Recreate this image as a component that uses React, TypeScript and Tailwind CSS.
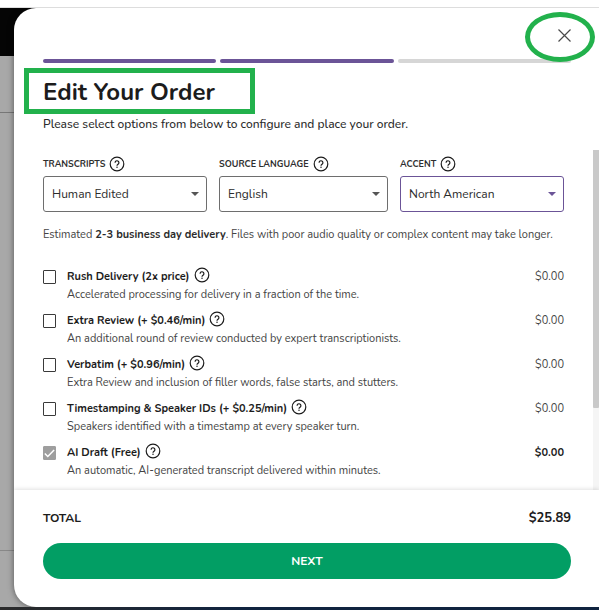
import { useState } from 'react'

const fields = [
  { id: 'transcripts', label: 'TRANSCRIPTS', value: 'Human Edited', active: false },
  { id: 'language', label: 'SOURCE LANGUAGE', value: 'English', active: false },
  { id: 'accent', label: 'ACCENT', value: 'North American', active: true },
]

const options = [
  {
    id: 'rush',
    title: 'Rush Delivery (2x price)',
    text: 'Accelerated processing for delivery in a fraction of the time.',
  },
  {
    id: 'review',
    title: 'Extra Review (+ $0.46/min)',
    text: 'An additional round of review conducted by expert transcriptionists.',
  },
  {
    id: 'verbatim',
    title: 'Verbatim (+ $0.96/min)',
    text: 'Extra Review and inclusion of filler words, false starts, and stutters.',
  },
  {
    id: 'timestamps',
    title: 'Timestamping & Speaker IDs (+ $0.25/min)',
    text: 'Speakers identified with a timestamp at every speaker turn.',
  },
  {
    id: 'draft',
    title: 'AI Draft (Free)',
    text: 'An automatic, AI-generated transcript delivered within minutes.',
    included: true,
  },
]

const HelpButton = ({ topic }: { topic: string }) => (
  <button type="button" aria-label={`Help: ${topic}`} className="shrink-0 self-start text-[#1c1c1c]">
    <svg viewBox="0 0 16 16" className="block size-4" fill="none" stroke="currentColor">
      <circle cx="8" cy="8" r="6.8" strokeWidth="1.2" />
      <path d="M6.1 6.7a1.9 1.9 0 1 1 3 1.5C8.4 8.7 8 8.9 8 9.7" strokeWidth="1.2" />
      <circle cx="8" cy="11.3" r="0.75" fill="currentColor" stroke="none" />
    </svg>
  </button>
)

const SelectField = ({ id, label, value, active }: any) => (
  <div>
    <div className="flex h-[18px] items-center gap-1">
      <label htmlFor={id} className="whitespace-nowrap text-[9px] font-bold text-[#2e2e2e]">
        {label}
      </label>
      <HelpButton topic={label} />
    </div>
    <div className="relative mt-0.5">
      <select
        id={id}
        className={`block h-9 w-full appearance-none rounded-[3px] border bg-white px-2 text-xs text-[#2b2b2b] outline-none ${
          active ? 'border-[#6b5497]' : 'border-[#6e6e6e]'
        }`}
      >
        <option>{value}</option>
      </select>
      <svg
        viewBox="0 0 8 4"
        className={`pointer-events-none absolute top-4 right-2 h-1 w-2 ${
          active ? 'text-[#6b5497]' : 'text-[#555555]'
        }`}
      >
        <path d="M0 0h8L4 4z" fill="currentColor" />
      </svg>
    </div>
  </div>
)

const OptionRow = ({ option, checked, onToggle }: any) => (
  <li className="flex items-start">
    <span className="relative mt-[3px] block h-3.5 w-[13px] shrink-0">
      <input
        id={option.id}
        type="checkbox"
        checked={checked}
        disabled={option.included}
        onChange={onToggle}
        className="block h-3.5 w-[13px] appearance-none rounded-[1px] border border-[#3a3a3a] bg-white checked:border-[#9e9e9e] checked:bg-[#9e9e9e]"
      />
      {checked && (
        <svg
          viewBox="0 0 13 14"
          className="pointer-events-none absolute inset-0 size-full"
          fill="none"
          stroke="white"
          strokeWidth="1.5"
        >
          <path d="M1.8 7.5l3 3 6.3-6.5" />
        </svg>
      )}
    </span>
    <div className="ml-[11px] min-w-0 flex-1">
      <div className="flex h-5 items-center gap-1">
        <label htmlFor={option.id} className="text-[11px] font-bold text-[#1c1c1c]">
          {option.title}
        </label>
        <HelpButton topic={option.title} />
      </div>
      <p className="text-[11px] leading-4 text-[#444444]">{option.text}</p>
    </div>
    <span
      className={`text-[11px] leading-5 ${
        option.included ? 'font-bold text-[#1c1c1c]' : 'text-[#444444]'
      }`}
    >
      $0.00
    </span>
  </li>
)

export default function App() {
  const [selected, setSelected] = useState<string[]>(['draft'])

  const toggle = (id: string) =>
    setSelected((prev) => (prev.includes(id) ? prev.filter((item) => item !== id) : [...prev, id]))

  return (
    <div className="flex min-h-screen flex-col bg-white font-['Nunito','Open_Sans',sans-serif]">
      <div className="h-2 border-b border-[#dddddd]" />
      <main className="relative flex flex-1 flex-col overflow-hidden pl-3.5">
        {/* dimmed page behind the dialog */}
        <div className="absolute inset-0 flex flex-col bg-[#a8a8a8]">
          <div className="h-12 bg-[#050505]" />
          <div className="h-[57px] border-b border-[#777777]" />
          <div className="flex-1" />
          <div className="h-[57px] border-t border-[#888888]" />
        </div>

        <section
          role="dialog"
          aria-labelledby="order-title"
          className="relative flex flex-1 flex-col overflow-hidden rounded-l-[22px] bg-white shadow-[0_0_6px_rgba(0,0,0,0.5)]"
        >
          <header className="pr-7 pl-[29px]">
            <div className="flex h-[51px] items-end justify-end pb-[17px]">
              <button type="button" aria-label="Close" className="text-[#4a4a4a]">
                <svg viewBox="0 0 13 13" className="block size-[13px]" fill="none" stroke="currentColor">
                  <path d="M0.5 0.5l12 12M12.5 0.5l-12 12" strokeWidth="1.2" />
                </svg>
              </button>
            </div>
            <div className="grid grid-cols-3 gap-1">
              <div className="h-1 rounded-full bg-[#6b5497]" />
              <div className="h-1 rounded-full bg-[#6b5497]" />
              <div className="h-1 rounded-full bg-[#d6d6d6]" />
            </div>
            <h1 id="order-title" className="mt-[13px] text-2xl font-bold text-[#1c1c1c]">
              Edit Your Order
            </h1>
            <p className="mt-1.5 text-xs leading-5 font-medium text-[#2b2b2b]">
              Please select options from below to configure and place your order.
            </p>
          </header>

          <div className="mt-4 flex flex-1">
            <div className="flex-1 px-[29px] pt-1.5 pb-2">
              <div className="grid grid-cols-[164fr_169fr_164fr] gap-3">
                {fields.map((field) => (
                  <SelectField key={field.id} {...field} />
                ))}
              </div>
              <p className="mt-[13px] text-[11px] leading-5 text-[#444444]">
                Estimated <b className="text-[#2b2b2b]">2-3 business day delivery</b>. Files with poor
                audio quality or complex content may take longer.
              </p>
              <ul className="mt-[22px] flex flex-col gap-2">
                {options.map((option) => (
                  <OptionRow
                    key={option.id}
                    option={option}
                    checked={selected.includes(option.id)}
                    onToggle={() => toggle(option.id)}
                  />
                ))}
              </ul>
            </div>
            <div className="flex w-1.5 flex-col bg-[#f5f5f5]">
              <div className="h-[76%] rounded-b-[1px] bg-[#c9c9c9]" />
            </div>
          </div>

          <footer className="pt-[17px] pr-7 pb-7 pl-[29px] shadow-[0_-1px_4px_rgba(0,0,0,0.12)]">
            <div className="flex h-[22px] items-center justify-between text-[#1c1c1c]">
              <span className="text-xs font-bold">TOTAL</span>
              <span className="text-[13px] leading-5 font-bold">$25.89</span>
            </div>
            <button
              type="button"
              className="mt-3.5 h-9 w-full rounded-full bg-[#029e64] text-xs font-bold text-white"
            >
              NEXT
            </button>
          </footer>
        </section>

        {/* hand-drawn markers over the dialog */}
        <div className="pointer-events-none absolute top-15 left-6 h-[46px] w-[231px] border-[5px] border-[#22b14c]" />
        <div className="pointer-events-none absolute top-1 right-1 h-[50px] w-[70px] rounded-[50%] border-[5px] border-[#22b14c]" />
      </main>
      <div className="h-[3px] bg-linear-to-r from-[#2b2b2b] to-[#10233f] to-40%" />
    </div>
  )
}
